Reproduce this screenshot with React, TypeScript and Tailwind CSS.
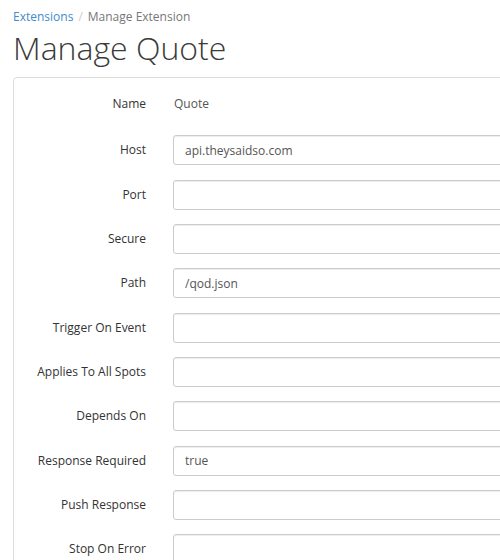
const FIELDS: { label: string; value: string }[] = [
  { label: 'Host', value: 'api.theysaidso.com' },
  { label: 'Port', value: '' },
  { label: 'Secure', value: '' },
  { label: 'Path', value: '/qod.json' },
  { label: 'Trigger On Event', value: '' },
  { label: 'Applies To All Spots', value: '' },
  { label: 'Depends On', value: '' },
  { label: 'Response Required', value: 'true' },
  { label: 'Push Response', value: '' },
  { label: 'Stop On Error', value: '' },
];

export default function App() {
  return (
    <div
      className="w-[500px] h-[560px] overflow-hidden bg-white text-[#333333]"
      style={{ fontFamily: '"Open Sans", "Liberation Sans", sans-serif' }}
    >
      <div className="pl-[13px]">
        <div className="pt-[8px] text-[12px] leading-[17px] flex items-center">
          <a className="text-[#428bca]">Extensions</a>
          <span className="px-[5px] text-[#cccccc]">/</span>
          <span className="text-[#777777]">Manage Extension</span>
        </div>
        <h1 className="mt-[5px] text-[32px] leading-[36px] font-light text-[#3a3a3a]">Manage Quote</h1>

        <div className="mt-[11px] w-[640px] border border-[#dddddd] rounded-[4px] pt-[11px] pb-[20px]">
          <div className="flex flex-col gap-[14.33px]">
            <div className="flex items-center h-[30px] mb-[2px]">
              <div className="w-[132px] text-right text-[12px] font-medium text-[#333333]">Name</div>
              <div className="ml-[28px] text-[12px] text-[#555555]">Quote</div>
            </div>
            {FIELDS.map((f) => (
              <div key={f.label} className="flex items-center h-[30px]">
                <label className="w-[132px] text-right text-[12px] font-medium text-[#333333]">{f.label}</label>
                <input
                  readOnly
                  value={f.value}
                  className="ml-[27px] w-[420px] h-[30px] px-[11px] text-[12px] text-[#555555] bg-white border border-[#cccccc] rounded-[3px] shadow-[inset_0_1px_1px_rgba(0,0,0,0.075)] focus:outline-none"
                />
              </div>
            ))}
          </div>
        </div>
      </div>
    </div>
  );
}
